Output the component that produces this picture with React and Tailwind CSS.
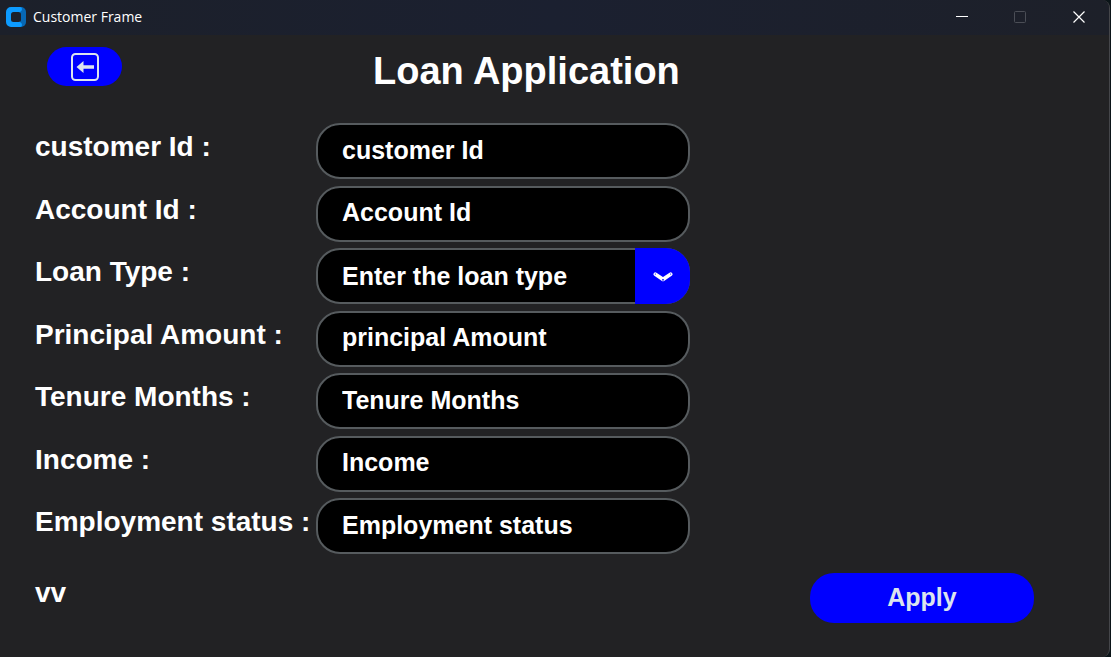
import React from "react";

const fields = [
  { id: "customer-id", label: "customer Id :", hint: "customer Id" },
  { id: "account-id", label: "Account Id :", hint: "Account Id" },
  { id: "loan-type", label: "Loan Type :", hint: "Enter the loan type", select: true },
  { id: "principal", label: "Principal Amount :", hint: "principal Amount" },
  { id: "tenure", label: "Tenure Months :", hint: "Tenure Months" },
  { id: "income", label: "Income :", hint: "Income" },
  { id: "employment", label: "Employment status :", hint: "Employment status" },
];

const control =
  "block h-14 w-full appearance-none rounded-3xl border-2 border-[#565b5e] bg-black px-6 text-[25px] font-bold text-white placeholder:text-white placeholder:opacity-100 outline-none";

function TitleBar() {
  return (
    <header className="flex h-[35px] items-center bg-gradient-to-r from-[#1c202a] via-[#1b2030] to-[#1d2029] pb-0.5 pl-1.5">
      <svg className="size-5" viewBox="0 0 20 20" aria-hidden="true">
        <path d="M10 0h5a5 5 0 0 1 5 5v10a5 5 0 0 1-5 5h-5z" fill="#0768b5" />
        <path d="M5 0h9q2 0 2 2t-2 3v10q2 1 2 3t-2 2H5a5 5 0 0 1-5-5V5a5 5 0 0 1 5-5z" fill="#0d9bff" />
        <rect x="5" y="5" width="10" height="10" rx="2.5" fill="#1c202a" />
      </svg>
      <span className="ml-[7px] flex-1 font-['Open_Sans',sans-serif] text-[14px] text-white">Customer Frame</span>
      <div className="flex h-full text-white">
        <button type="button" aria-label="Minimize" className="flex w-[58px] items-center justify-center">
          <svg width="12" height="12" viewBox="0 0 12 12"><path d="M0 5h12v1H0z" fill="currentColor" /></svg>
        </button>
        <button type="button" aria-label="Maximize" disabled className="flex w-[58px] items-center justify-center text-[#4b4e56]">
          <svg width="12" height="12" viewBox="0 0 12 12"><rect x=".5" y=".5" width="11" height="11" rx="1" fill="none" stroke="currentColor" /></svg>
        </button>
        <button type="button" aria-label="Close" className="flex w-[60px] items-center justify-center">
          <svg width="12" height="12" viewBox="0 0 12 12"><path d="M.5.5l11 11M11.5.5l-11 11" stroke="currentColor" strokeWidth="1.2" /></svg>
        </button>
      </div>
    </header>
  );
}

function Field({ field }) {
  return (
    <div className="grid grid-cols-[281px_374px]">
      <label htmlFor={field.id} className="pt-1 text-[28px] leading-10 font-bold whitespace-nowrap">
        {field.label}
      </label>
      {field.select ? (
        <div className="relative">
          <select id={field.id} className={`${control} pt-0.5`}>
            <option>{field.hint}</option>
          </select>
          <span className="pointer-events-none absolute inset-y-0 right-0 flex w-[55px] items-center justify-center rounded-r-3xl bg-[#0000ff] pt-0.5">
            <svg width="20" height="12" viewBox="0 0 20 12" aria-hidden="true">
              <path d="M2.4 3.2L10 8.4l7.6-5.2" fill="none" stroke="#fff" strokeWidth="3.8" strokeLinecap="round" strokeLinejoin="round" />
              <circle cx="2.4" cy="3" r=".6" fill="#00f" />
              <circle cx="17.6" cy="3" r=".6" fill="#00f" />
              <circle cx="10" cy="8.8" r=".9" fill="#00f" />
            </svg>
          </span>
        </div>
      ) : (
        <input id={field.id} type="text" placeholder={field.hint} className={`${control} pb-0.5`} />
      )}
    </div>
  );
}

export default function App() {
  return (
    <div className="min-h-screen bg-[#0b1418] pr-px font-['Liberation_Sans',Arial,sans-serif] text-white">
      <div className="flex min-h-screen flex-col overflow-hidden rounded-r-lg border-r border-[#45464a] bg-[#222224]">
        <TitleBar />
        <main className="flex-1 pl-[35px]">
          <div className="flex h-[88px] items-start pt-3 pl-3">
            <button type="button" aria-label="Back" className="flex h-[39px] w-[75px] items-center justify-center rounded-full bg-[#0000ff]">
              <svg width="28" height="28" viewBox="0 0 28 28" aria-hidden="true">
                <rect x="1" y="1" width="26" height="26" rx="3.5" fill="none" stroke="#dce4ee" strokeWidth="2" />
                <path d="M5.5 14l7-6v4.2H23v3.6H12.5V20z" fill="#dce4ee" />
              </svg>
            </button>
            <h1 className="ml-[251px] text-[38px] leading-[48px] font-bold whitespace-nowrap">Loan Application</h1>
          </div>
          <form>
            <div className="flex min-h-[431px] flex-col justify-between">
              {fields.map((f) => (
                <Field key={f.id} field={f} />
              ))}
            </div>
            <div className="mt-[19px] flex items-start justify-between pr-[75px]">
              <output className="text-[28px] leading-10 font-bold">vv</output>
              <button type="button" className="h-[50px] w-56 rounded-3xl bg-[#0000ff] text-[25px] font-bold text-[#dce4ee]">
                Apply
              </button>
            </div>
          </form>
        </main>
      </div>
    </div>
  );
}
